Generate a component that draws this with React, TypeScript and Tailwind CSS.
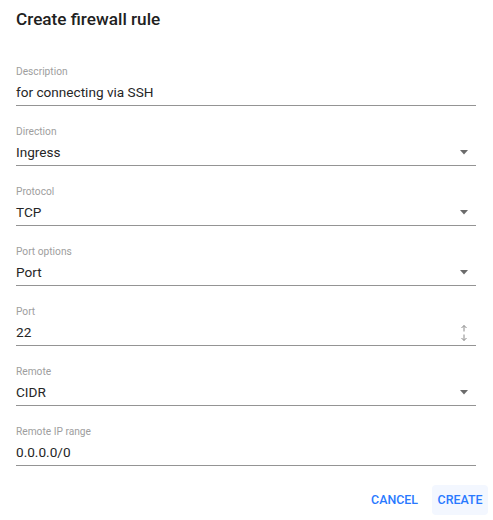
import React from 'react';

type Field = { label: string; value: string; kind: 'text' | 'select' | 'number' };

const FIELDS: Field[] = [
  { label: 'Description', value: 'for connecting via SSH', kind: 'text' },
  { label: 'Direction', value: 'Ingress', kind: 'select' },
  { label: 'Protocol', value: 'TCP', kind: 'select' },
  { label: 'Port options', value: 'Port', kind: 'select' },
  { label: 'Port', value: '22', kind: 'number' },
  { label: 'Remote', value: 'CIDR', kind: 'select' },
  { label: 'Remote IP range', value: '0.0.0.0/0', kind: 'text' },
];

function DropArrow() {
  return (
    <svg width="8" height="5" viewBox="0 0 8 5" className="shrink-0">
      <path d="M0 0h8L4 4.5z" fill="#6b6b6b" />
    </svg>
  );
}

function Spinner() {
  return (
    <svg width="8" height="18" viewBox="0 0 8 18" className="shrink-0">
      <g stroke="#8a8a8a" strokeWidth="1" fill="none">
        <path d="M4 1.5v6M1.5 4L4 1.5 6.5 4" />
        <path d="M4 10.5v6M1.5 14L4 16.5 6.5 14" />
      </g>
    </svg>
  );
}

function FormField({ field }: { field: Field }) {
  return (
    <div className="flex flex-col">
      <label className="text-[10.2px] leading-[14px] text-[#9e9e9e]">{field.label}</label>
      <div className="mt-[4px] flex h-[23px] items-center justify-between border-b border-[#949494] pb-[3px]">
        <span className="text-[13.6px] text-[#262626]">{field.value}</span>
        {field.kind === 'select' && <span className="mr-[8px]"><DropArrow /></span>}
        {field.kind === 'number' && <span className="mr-[8px]"><Spinner /></span>}
      </div>
    </div>
  );
}

export default function App() {
  return (
    <div className="h-[520px] w-[493px] bg-white font-['Roboto',sans-serif]">
      <div className="px-[16px] pt-[7px]">
        <h2 className="text-[17.2px] font-medium leading-[24px] text-[#212121]">Create firewall rule</h2>
      </div>
      <div className="mt-[34px] flex w-[476px] flex-col gap-[19px] pl-[16px]">
        {FIELDS.map(f => (
          <FormField key={f.label} field={f} />
        ))}
      </div>
      <div className="mt-[19px] flex justify-end gap-[8px] pr-[5px]">
        <button className="h-[30px] rounded px-[6px] text-[12.4px] font-medium text-[#2979ff]">CANCEL</button>
        <button className="h-[30px] w-[56px] rounded bg-[#f3f7ff] text-[12.4px] font-medium text-[#2979ff]">CREATE</button>
      </div>
    </div>
  );
}
